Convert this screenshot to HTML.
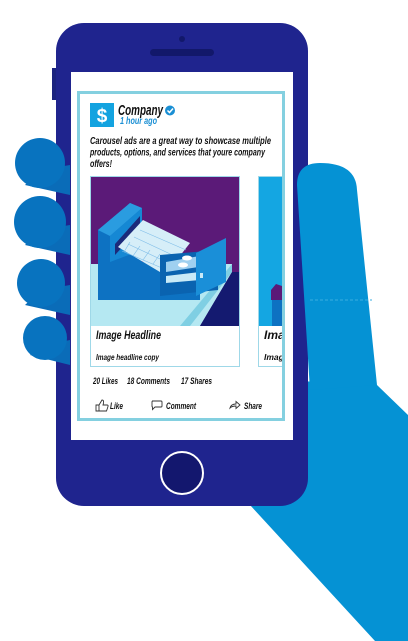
<!DOCTYPE html>
<html><head><meta charset="utf-8"><style>
html,body{margin:0;padding:0;background:#fff;width:408px;height:641px;overflow:hidden}
svg{display:block}
text{font-family:"Liberation Sans",sans-serif;font-style:italic;font-weight:bold}
</style></head><body>
<svg width="408" height="641" viewBox="0 0 408 641" xmlns="http://www.w3.org/2000/svg">
<polygon points="280,380 377,385 408,415 408,641 375,641 250,505 250,480 280,480" fill="#0592d4"/>
<rect x="52" y="68" width="6" height="32" fill="#1b237f"/>
<rect x="56" y="23" width="252" height="483" rx="28" fill="#1f248e"/>
<circle cx="182" cy="39" r="3" fill="#12186a"/>
<rect x="150" y="49" width="64" height="7" rx="3.5" fill="#12186a"/>
<rect x="71" y="72" width="222" height="368" fill="#fff"/>
<circle cx="182" cy="473" r="21" fill="#13176e" stroke="#fff" stroke-width="2"/>
<rect x="78.5" y="92.5" width="205" height="327" fill="#fff" stroke="#84d0e0" stroke-width="3"/>
<rect x="90" y="103" width="24" height="24" fill="#13a3e0"/>
<text x="102" y="122" font-size="19" fill="#fff" text-anchor="middle" style="font-style:normal">$</text>
<text x="118" y="115" font-size="14.5" fill="#111" textLength="45" lengthAdjust="spacingAndGlyphs">Company</text>
<circle cx="170" cy="110.5" r="5" fill="#1a8fd4"/>
<path d="M167.5 110.5 l2 2 l3.5 -4" stroke="#fff" stroke-width="1.5" fill="none"/>
<text x="120" y="124" font-size="10" fill="#1a8fd4" textLength="37" lengthAdjust="spacingAndGlyphs">1 hour ago</text>
<text x="90" y="144" font-size="9.8" fill="#111" textLength="181" lengthAdjust="spacingAndGlyphs">Carousel ads are a great way to showcase multiple</text>
<text x="90" y="155.5" font-size="9.8" fill="#111" textLength="175" lengthAdjust="spacingAndGlyphs">products, options, and services that youre company</text>
<text x="90" y="167" font-size="9.8" fill="#111" textLength="22" lengthAdjust="spacingAndGlyphs">offers!</text>
<rect x="90.5" y="176.5" width="149" height="190" fill="#fff" stroke="#9fd8e8"/>
<rect x="91" y="177" width="148" height="149" fill="#5b1a78"/>
<polygon points="91,264 232,264 232,272 200,326 91,326" fill="#b5e8f2"/>
<polygon points="232,272 200,326 239,326 239,272" fill="#141a70"/>
<polygon points="190,326 232,272 232,264 180,326" fill="#7fcfe3"/>
<polygon points="98,230 130,203 142,208 142,262 200,262 200,300 98,300" fill="#0d72c2"/>
<polygon points="98,230 130,203 142,208 110,236" fill="#2a9ce0"/>
<polygon points="110,236 142,208 142,250 110,262" fill="#1588d4"/>
<polygon points="115,244 140,216 140,228 115,255" fill="#1c2a7a"/>
<polygon points="118,247 143,220 190,243 165,275" fill="#d6eef8"/>
<g stroke="#7fbde8" stroke-width="0.6"><path d="M122 251 L169 271 M128 244 L175 266 M134 237 L181 259 M140 230 L186 250"/><path d="M130 242 L124 252 M140 246 L133 256 M150 250 L143 260 M160 254 L153 264 M170 258 L163 268"/></g>
<polygon points="160,255 218,250 218,290 160,296" fill="#0a63b0"/>
<polygon points="166,262 205,255 205,266 166,272" fill="#9fd0f0"/>
<ellipse cx="183" cy="265" rx="5" ry="2.5" fill="#fff"/>
<ellipse cx="187" cy="258" rx="5" ry="2.5" fill="#fff"/>
<polygon points="166,276 200,272 200,280 166,283" fill="#c9eaf7"/>
<polygon points="196,253 226,238 226,282 196,296" fill="#1a8fd8"/>
<rect x="200" y="273" width="3" height="5" fill="#c9eaf7"/>
<text x="96" y="339" font-size="12" fill="#111" textLength="65" lengthAdjust="spacingAndGlyphs">Image Headline</text>
<text x="96" y="360" font-size="8.5" fill="#111" textLength="63" lengthAdjust="spacingAndGlyphs">Image headline copy</text>
<rect x="258.5" y="176.5" width="26" height="190" fill="#fff" stroke="#9fd8e8"/>
<rect x="259" y="177" width="23" height="149" fill="#14a6e2"/>
<polygon points="271,290 276,284 282,286 282,300 271,300" fill="#5b1a78"/>
<rect x="272" y="300" width="10" height="26" fill="#0d72c2"/>
<text x="264" y="339" font-size="12" fill="#111">Ima</text>
<text x="264" y="360" font-size="8.5" fill="#111">Imag</text>
<rect x="282" y="176" width="5" height="192" fill="#fff"/>
<rect x="282" y="92" width="3" height="329" fill="#84d0e0"/>
<rect x="285" y="92" width="8" height="329" fill="#fff"/>
<text x="93" y="384" font-size="9" fill="#111" textLength="25" lengthAdjust="spacingAndGlyphs">20 Likes</text>
<text x="127" y="384" font-size="9" fill="#111" textLength="43" lengthAdjust="spacingAndGlyphs">18 Comments</text>
<text x="181" y="384" font-size="9" fill="#111" textLength="31" lengthAdjust="spacingAndGlyphs">17 Shares</text>
<path d="M96 411 v-6 h3 l3 -5 q2 0 1.5 3 l-0.5 2 h4 q1.5 0 1 1.5 l-1.5 4.5 z M99 405 v6" stroke="#333" stroke-width="0.9" fill="none"/>
<text x="110" y="409" font-size="9" fill="#111" textLength="13" lengthAdjust="spacingAndGlyphs">Like</text>
<path d="M152 401 h9 q1 0 1 1 v4 q0 1 -1 1 h-6 l-2.5 2.5 v-2.5 q-0.5 0 -0.5 -1 v-4 q0 -1 1 -1z" stroke="#333" stroke-width="0.9" fill="none"/>
<text x="166" y="409" font-size="9" fill="#111" textLength="30" lengthAdjust="spacingAndGlyphs">Comment</text>
<path d="M230 408 q1 -4 6 -4 v-2.5 l4 3.5 l-4 3.5 v-2.5 q-4 0 -6 2z" stroke="#333" stroke-width="0.9" fill="none"/>
<text x="244" y="409" font-size="9" fill="#111" textLength="18" lengthAdjust="spacingAndGlyphs">Share</text>
<path d="M297 185 Q297 163 320 163 Q356 163 357 190 L377 385 L310 390 Z" fill="#0592d4"/>
<path d="M310 300 H372" stroke="#3aaee0" stroke-width="1" stroke-dasharray="3 2"/>
<g fill="#0a6cb8">
<polygon points="40,170 70,165 70,195 25,185"/>
<polygon points="40,230 70,225 70,255 25,245"/>
<polygon points="41,290 70,285 70,315 25,305"/>
<polygon points="45,345 70,340 70,365 30,355"/>
</g>
<g fill="#0873bf">
<circle cx="40" cy="163" r="25"/>
<circle cx="40" cy="222" r="26"/>
<circle cx="41" cy="283" r="24"/>
<circle cx="45" cy="338" r="22"/>
</g>
</svg>
</body></html>
